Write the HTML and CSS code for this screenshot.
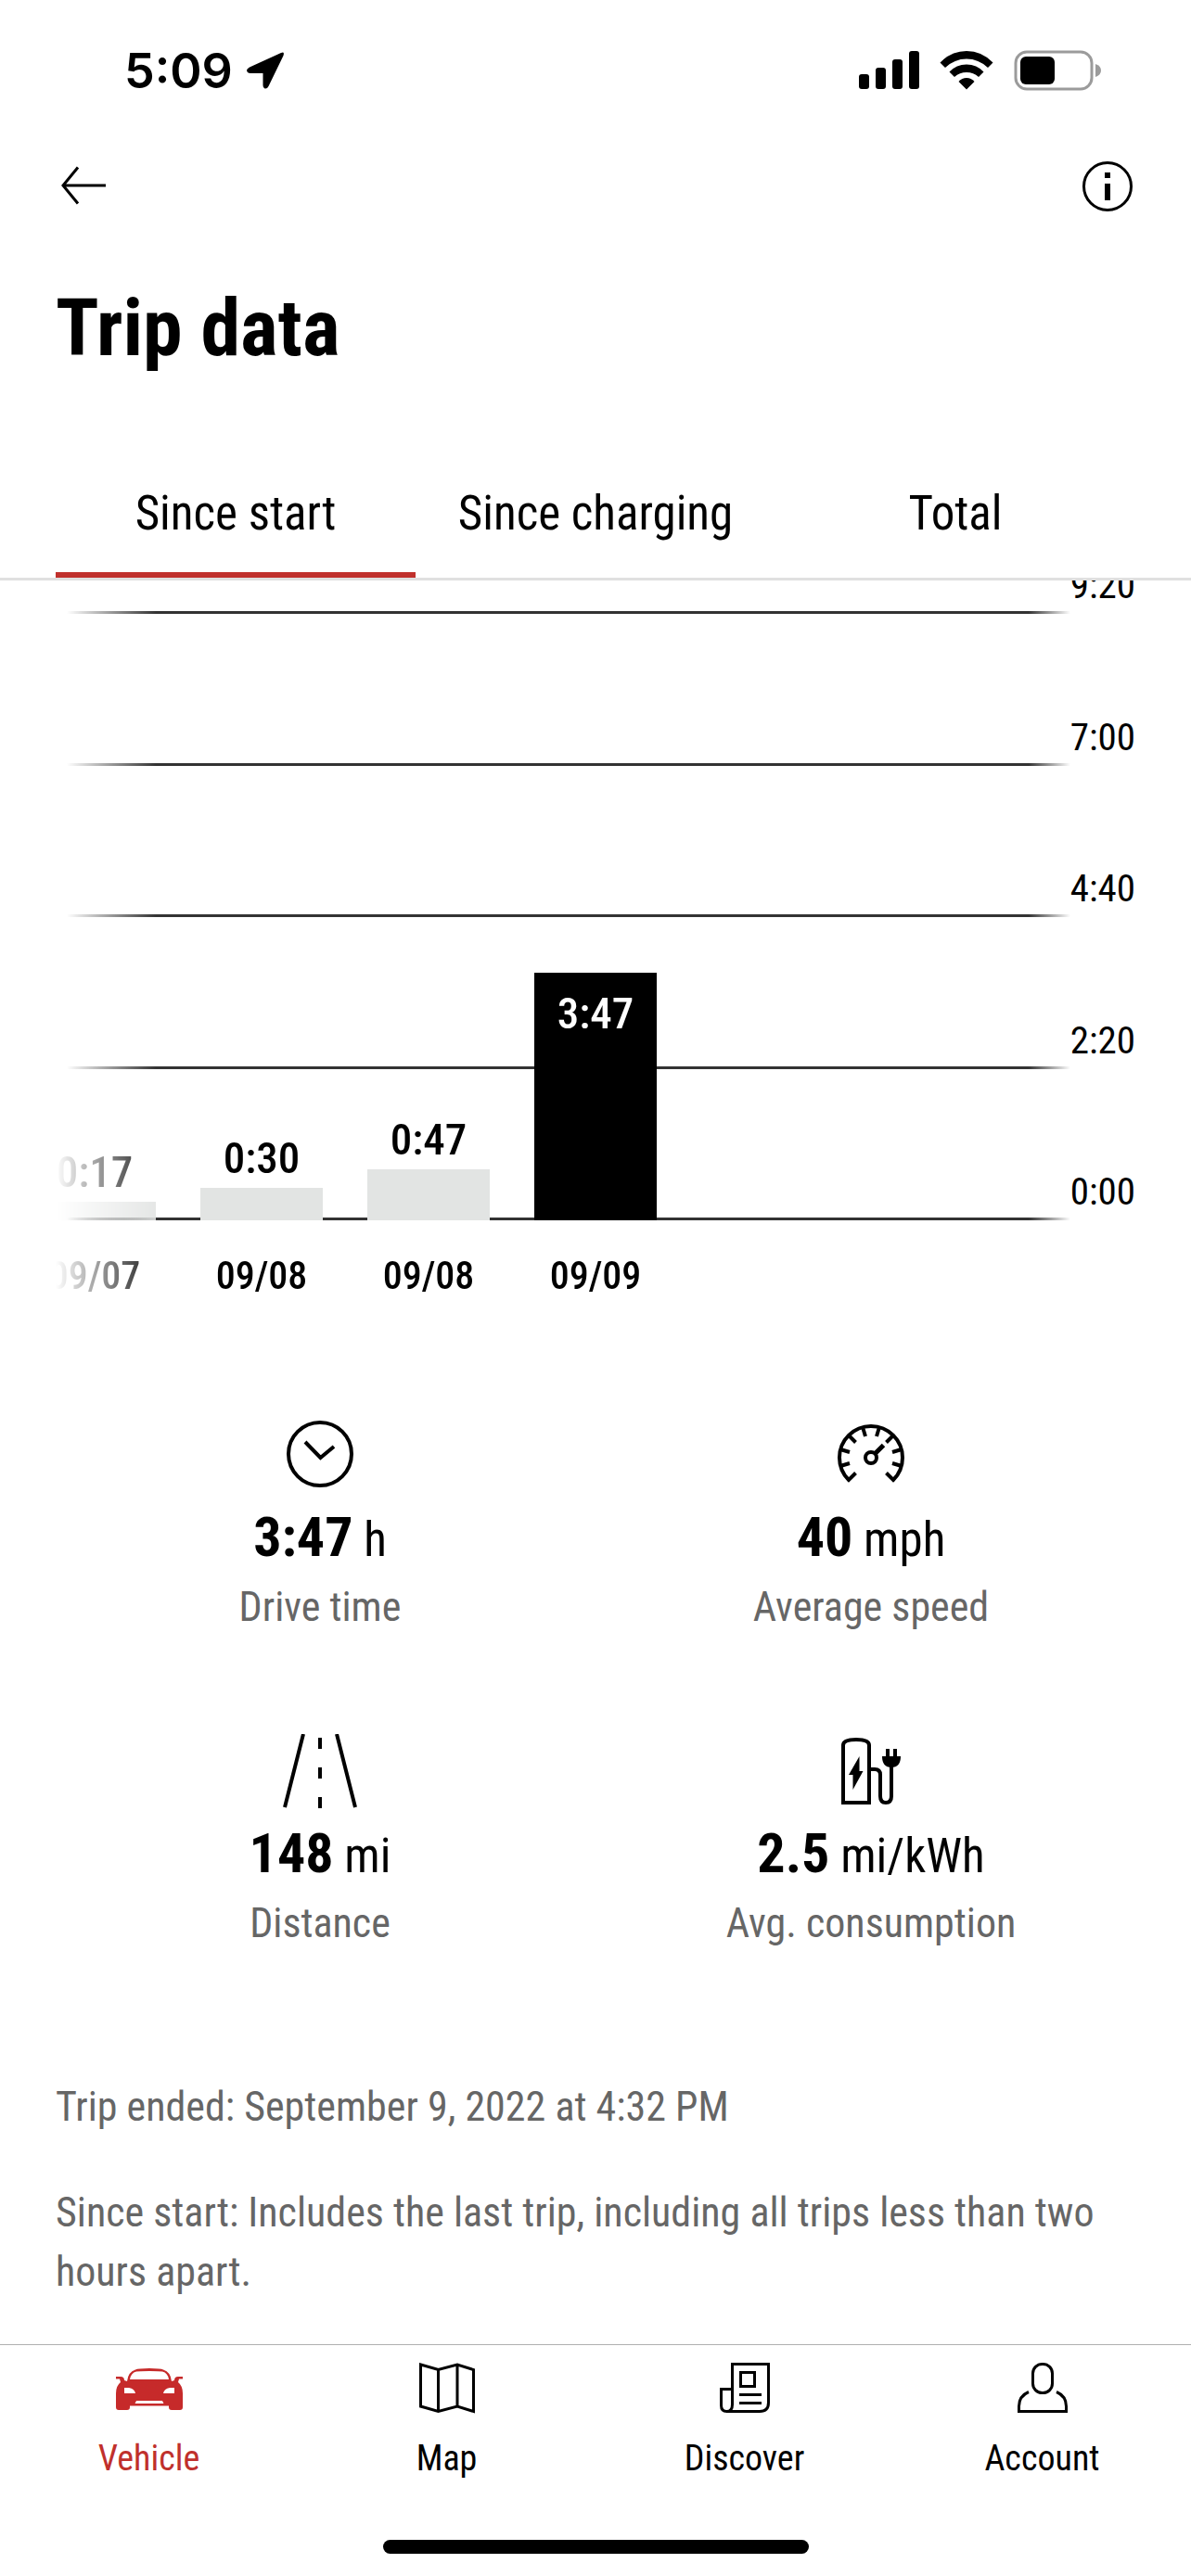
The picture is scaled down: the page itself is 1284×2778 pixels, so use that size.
FILE: index.html
```html
<!DOCTYPE html>
<html lang="en">
<head>
  <meta charset="UTF-8">
  <meta name="viewport" content="width=device-width, initial-scale=1.0">
  <title>Trip data</title>
  <link rel="stylesheet" href="styles.css">
</head>
<body>
  <!-- Status bar -->
  <div class="status-bar">
    <div class="status-time">
      <span>5:09</span>
      <svg width="42" height="42" viewBox="0 0 42 42"><path d="M38 2 4 17.500Q1 19 1 21Q1.500 24 5 24H18.500V37Q18.500 40 20.500 40.500Q23 41 24.500 38L40.500 5Q42 0 38 2Z"/></svg>
    </div>
    <div class="status-icons">
      <svg width="65" height="42" viewBox="0 0 65 42">
        <rect x="0" y="25" width="11" height="16" rx="3"/>
        <rect x="18" y="18" width="11" height="23" rx="3"/>
        <rect x="36" y="9" width="11" height="32" rx="3"/>
        <rect x="54" y="0" width="11" height="41" rx="3"/>
      </svg>
      <svg width="58" height="42" viewBox="0 0 58 42">
        <path d="M0.500 12.500Q12.500 0 29 0T57.500 12.500L52 18Q42 8.500 29 8.500T6 18Z"/>
        <path d="M10.500 22.500Q18 14.500 29 14.500T47.500 22.500L42 28Q36.500 23 29 23T16 28Z"/>
        <path d="M20.500 33Q24 29 29 29T37.500 33L29 41.500Z"/>
      </svg>
      <svg width="95" height="44" viewBox="0 0 95 44">
        <rect x="2" y="2" width="82" height="40" rx="12" fill="none" stroke="#9b9b9b" stroke-width="3"/>
        <rect x="7" y="7" width="37" height="30" rx="6"/>
        <path d="M88 15Q94 17 94 22T88 29Z" fill="#9b9b9b"/>
      </svg>
    </div>
  </div>

  <!-- Header -->
  <header class="header">
    <div class="toolbar">
      <button class="icon-btn" aria-label="Back">
        <svg width="60" height="60" viewBox="0 0 60 60" fill="none" stroke="#000" stroke-width="3"><path d="M54 30H8M24 10.500 8 30 24 49.500"/></svg>
      </button>
      <button class="icon-btn" aria-label="Info">
        <svg width="60" height="60" viewBox="0 0 60 60">
          <circle cx="30" cy="31" r="25.500" fill="none" stroke="#000" stroke-width="3"/>
          <path d="M27 16h6v6h-6zM27 28h6v18h-6z"/>
        </svg>
      </button>
    </div>
    <h1>Trip data</h1>
    <nav class="tabs">
      <button class="tab active">Since start</button>
      <button class="tab">Since charging</button>
      <button class="tab">Total</button>
    </nav>
  </header>

  <main class="content">
    <!-- Chart -->
    <section class="chart">
      <div class="scale">
        <div class="scale-row"><i></i><span>9:20</span></div>
        <div class="scale-row"><i></i><span>7:00</span></div>
        <div class="scale-row"><i></i><span>4:40</span></div>
        <div class="scale-row"><i></i><span>2:20</span></div>
        <div class="scale-row"><i></i><span>0:00</span></div>
      </div>
      <ul class="bars">
        <li><b>0:17</b><div class="bar" style="height: 20px"></div><time>09/07</time></li>
        <li><b>0:30</b><div class="bar" style="height: 35px"></div><time>09/08</time></li>
        <li><b>0:47</b><div class="bar" style="height: 55px"></div><time>09/08</time></li>
        <li><div class="bar selected" style="height: 267px"><b>3:47</b></div><time>09/09</time></li>
      </ul>
    </section>

    <!-- Stats -->
    <section class="stats">
      <div class="stat">
        <svg width="80" height="80" viewBox="0 0 80 80" fill="none" stroke="#000" stroke-width="4">
          <circle cx="40" cy="39" r="34"/>
          <path d="M24 26 40.500 43 55 31"/>
        </svg>
        <p class="value"><b>3:47</b> h</p>
        <p class="label">Drive time</p>
      </div>
      <div class="stat">
        <svg width="80" height="80" viewBox="0 0 80 80" fill="none" stroke="#000" stroke-width="4">
          <path d="M23.500 59.500 16 67A34 34 0 1 1 64 67L56.500 59.500"/>
          <path d="M7 52 17 49M7 34 17 37M16 19 23.500 26.500M31 10 34 20M49 10 46 20M64 19 56.500 26.500M73 34 63 37M73 52 63 49"/>
          <circle cx="40" cy="43" r="6"/>
          <path d="M44 39 53.500 29.500" stroke-width="5"/>
        </svg>
        <p class="value"><b>40</b> mph</p>
        <p class="label">Average speed</p>
      </div>
      <div class="stat">
        <svg width="80" height="80" viewBox="0 0 80 80" fill="none" stroke="#000" stroke-width="4">
          <path d="M22 0 2 79M58 0 78 79M40 4V16M40 36V48M40 68V80"/>
        </svg>
        <p class="value"><b>148</b> mi</p>
        <p class="label">Distance</p>
      </div>
      <div class="stat">
        <svg width="80" height="80" viewBox="0 0 80 80" fill="none" stroke="#000" stroke-width="4">
          <path d="M10 74V12Q10 6 24 6T38 12V74Z"/>
          <path d="M38 38H44Q50 38 50 44V67Q50 74 56 74T62 67V34"/>
          <path d="M27.500 24 16 44H20.500V60L31.500 40H27.500ZM52 24H72Q72 36 62 36T52 24Z" fill="#000" stroke="none"/>
          <path d="M58 16V26M66 16V26"/>
        </svg>
        <p class="value"><b>2.5</b> mi/kWh</p>
        <p class="label">Avg. consumption</p>
      </div>
    </section>

    <!-- Notes -->
    <section class="notes">
      <p>Trip ended: September 9, 2022 at 4:32 PM</p>
      <p>Since start: Includes the last trip, including all trips less than two hours apart.</p>
    </section>
  </main>

  <!-- Bottom navigation -->
  <nav class="navbar">
    <a href="#vehicle" class="active">
      <svg width="72" height="60" viewBox="0 0 72 60" fill="#c62a2a">
        <path d="M12 23Q13 13 21 10.500Q24 9 36 9T51 10.500Q59 13 60 23L63 22Q63 18 67 18H72V20.500H68L67 24Q72 28 72 36V51Q72 54 69 54H60Q57 54 57 51V49.500H15V51Q15 54 12 54H3Q0 54 0 51V36Q0 28 5 24L4 20.500H0V18H5Q9 18 9 22Z"/>
        <path d="M15 21Q16 14 22 12.500Q25 12 36 12T50 12.500Q56 14 57 21ZM9 30H14Q20 31 21 36H9ZM63 30H58Q52 31 51 36H63ZM22 44 20.500 47H51.500L50 44Z" fill="#fff"/>
      </svg>
      Vehicle
    </a>
    <a href="#map">
      <svg width="60" height="60" viewBox="0 0 60 60" fill="none" stroke="#000" stroke-width="3">
        <path d="M1.500 5 20.500 10.500 41 5 58.500 10.500V55.500L41 50 20.500 55.500 1.500 50ZM20.500 10V55M41 5V50"/>
      </svg>
      Map
    </a>
    <a href="#discover">
      <svg width="60" height="60" viewBox="0 0 60 60" fill="none" stroke="#000" stroke-width="3">
        <path d="M16.500 48V4.500H55.500V46Q55.500 55.500 46 55.500H10.500Q16.500 55.500 16.500 48M16.500 31.500H4.500V49Q4.500 55.500 10.500 55.500"/>
        <path d="M25.500 13.500H40.500V28.500H25.500ZM24 37.500H48M24 46.500H48"/>
      </svg>
      Discover
    </a>
    <a href="#account">
      <svg width="60" height="60" viewBox="0 0 60 60" fill="none" stroke="#000" stroke-width="3">
        <rect x="19.500" y="4.500" width="21" height="31" rx="10"/>
        <path d="M15 34.500Q4.500 39 4.500 50V55.500H55.500V50Q55.500 39 45 34.500"/>
      </svg>
      Account
    </a>
  </nav>
  <div class="home-indicator"></div>
</body>
</html>
```

FILE: styles.css
```css
* {
  box-sizing: border-box;
}

body {
  font-family: "Roboto Condensed", "Liberation Sans Narrow", Roboto, sans-serif;
  background-color: #fff;
  color: #000;
  margin: 0;
  min-height: 100vh;
  display: flex;
  flex-direction: column;
}

h1, p, ul {
  margin: 0;
  padding: 0;
}

svg {
  display: block;
}

button {
  font-family: inherit;
  color: inherit;
  background: none;
  border: none;
  padding: 0;
  cursor: pointer;
}

/* status bar */
.status-bar {
  display: flex;
  justify-content: space-between;
  align-items: center;
  height: 152px;
  padding: 0 96px 0 134px;
}

.status-time {
  display: flex;
  align-items: center;
  gap: 14px;
  font-family: Inter, sans-serif;
  font-size: 52px;
  font-weight: 600;
}

.status-icons {
  display: flex;
  align-items: center;
  gap: 22px;
}

/* header */
.header {
  border-bottom: 3px solid #e0e0e0;
}

.toolbar {
  display: flex;
  justify-content: space-between;
  padding: 18px 60px 0 60px;
}

.icon-btn {
  width: 60px;
  height: 60px;
}

h1 {
  padding: 74px 60px 0;
  font-size: 86px;
  line-height: 100px;
  font-weight: 700;
}

.tabs {
  display: grid;
  grid-template-columns: repeat(3, 1fr);
  margin: 78px 60px 0;
}

.tab {
  height: 141px;
  padding-top: 8px;
  font-size: 51px;
  border-bottom: 6px solid transparent;
}

.tab.active {
  border-color: #c0302c;
}

/* chart */
.chart {
  display: grid;
  grid-template-rows: 690px 94px;
  grid-template-columns: 100%;
  margin: 0 60px;
  overflow: hidden;
}

.scale {
  grid-area: 1 / 1;
  display: flex;
  flex-direction: column;
}

.scale-row {
  flex: 1;
  display: flex;
  align-items: flex-end;
}

.scale-row:first-child {
  flex: none;
  height: 36px;
}

.scale-row i {
  flex: 1;
  height: 3px;
  background: linear-gradient(to right, transparent 12px, #333 108px, #333 calc(100% - 45px), transparent);
}

.scale-row span {
  font-size: 41px;
  line-height: 40px;
  padding-bottom: 11px;
}

.bars {
  grid-area: 1 / 1 / 3 / 2;
  display: flex;
  align-items: flex-end;
  gap: 48px;
  list-style: none;
  -webkit-mask-image: linear-gradient(to right, transparent, #000 120px);
  mask-image: linear-gradient(to right, transparent, #000 120px);
}

.bars li {
  width: 132px;
  text-align: center;
}

/* oldest bar is half scrolled out of view */
.bars li:first-child {
  margin-left: -24px;
}

.bars b {
  display: block;
  font-size: 47px;
  line-height: 48px;
  font-weight: 500;
  padding-bottom: 8px;
}

.bars time {
  display: block;
  font-size: 42px;
  line-height: 52px;
  font-weight: 500;
  padding: 34px 0 8px;
}

.bar {
  background-color: #e2e4e3;
}

.bar.selected {
  background-color: #000;
  color: #fff;
  padding-top: 20px;
}

/* stats */
.stats {
  display: grid;
  grid-template-columns: 1fr 1fr;
  column-gap: 24px;
  row-gap: 113px;
  margin: 119px 60px 0;
}

.stat {
  display: flex;
  flex-direction: column;
  align-items: center;
}

.value {
  font-size: 51px;
  line-height: 72px;
  margin-top: 16px;
}

.value b {
  font-size: 60px;
  line-height: 60px;
  font-weight: 700;
}

.label {
  font-size: 44px;
  line-height: 48px;
  margin-top: 12px;
  color: #666;
}

/* notes */
.notes {
  padding: 142px 60px 0;
  font-size: 44px;
  line-height: 64px;
  color: #666;
}

.notes p + p {
  margin-top: 50px;
}

/* bottom navigation */
.navbar {
  display: grid;
  grid-template-columns: repeat(4, 1fr);
  margin-top: auto;
  border-top: 1px solid #b0b0b0;
  padding-top: 16px;
}

.navbar a {
  display: flex;
  flex-direction: column;
  align-items: center;
  gap: 24px;
  font-size: 38px;
  line-height: 44px;
  color: #000;
  text-decoration: none;
}

.navbar a.active {
  color: #c0302c;
}

.home-indicator {
  width: 459px;
  height: 15px;
  margin: 66px auto 24px;
  border-radius: 8px;
  background-color: #000;
}
```
